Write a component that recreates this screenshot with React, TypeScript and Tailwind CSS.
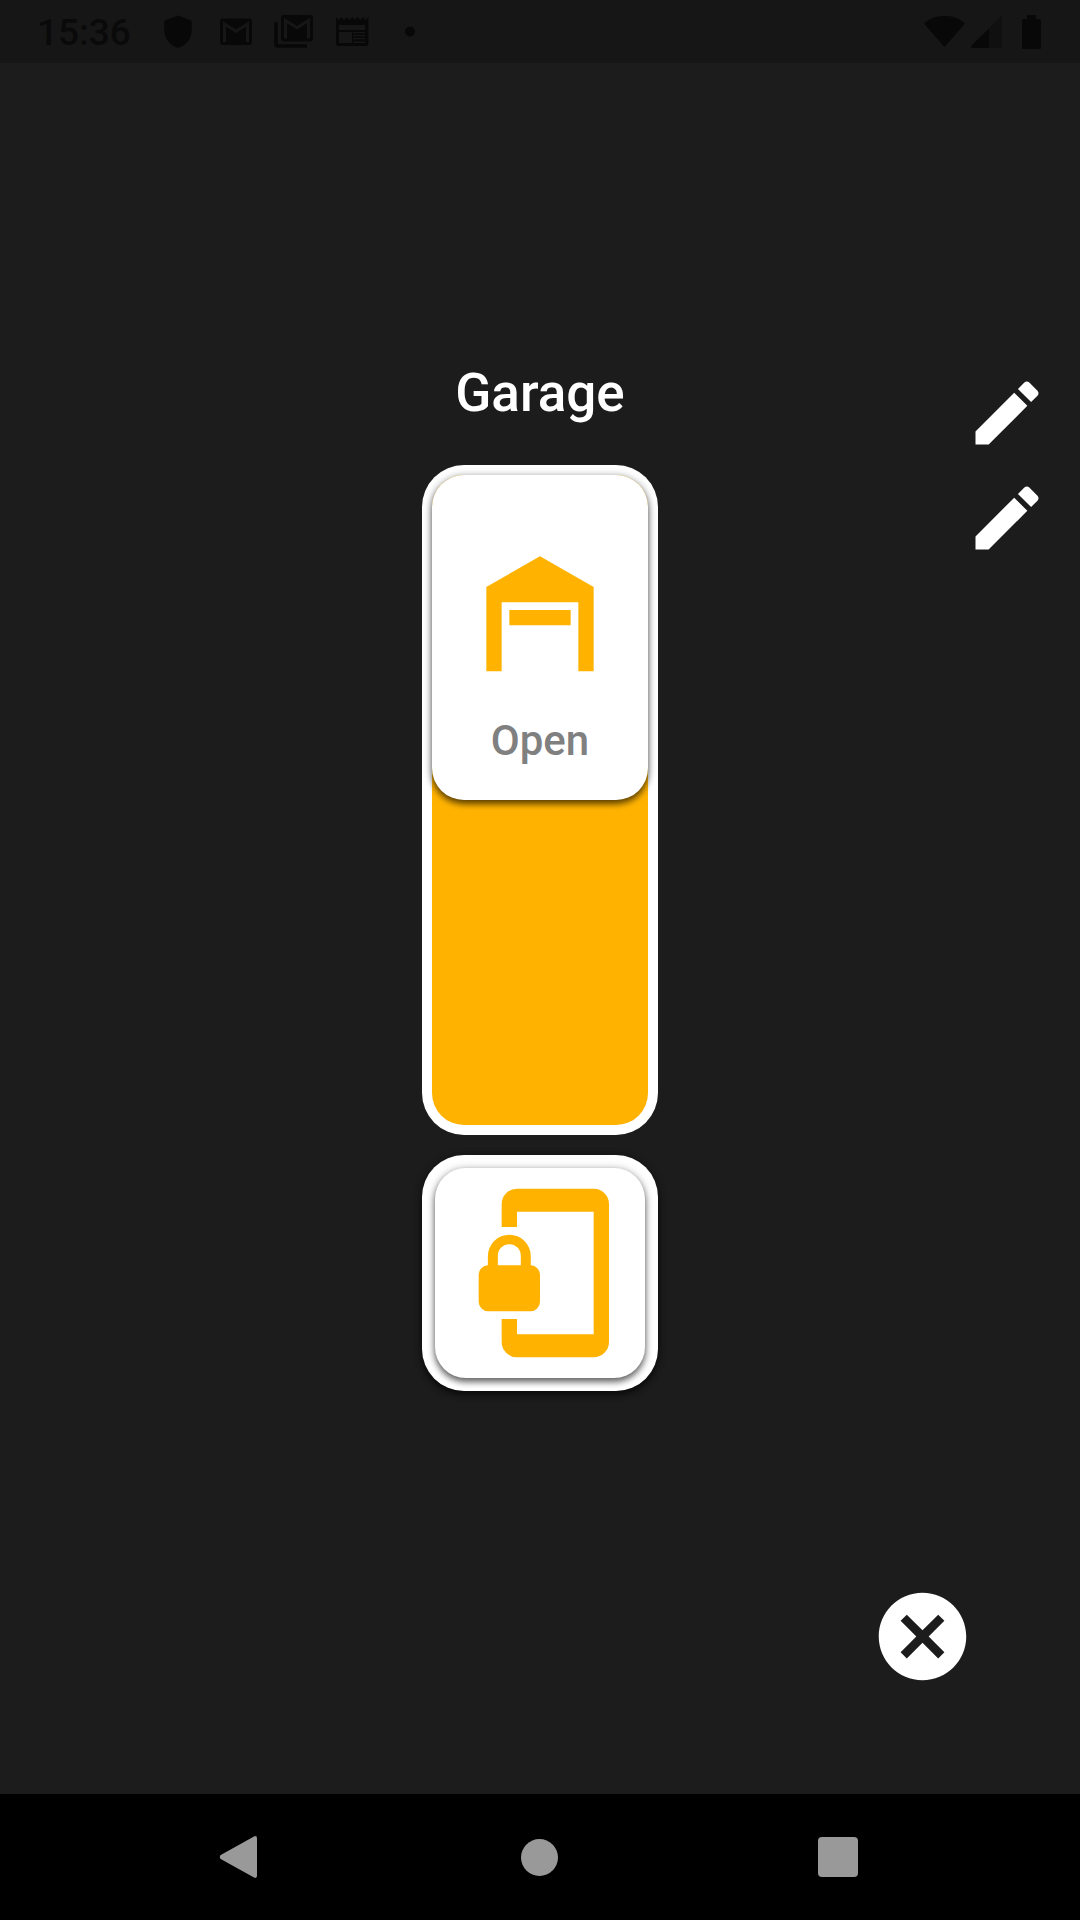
import { useState } from "react";

function ShieldIcon() {
  return (
    <svg viewBox="0 0 40 40" className="size-10" fill="currentColor" aria-hidden="true">
      <path d="M20 3.5 33.7 8.8V18.5C33.7 26.5 28 33.5 20 36 12 33.5 6.3 26.5 6.3 18.5V8.8Z" />
    </svg>
  );
}

function MailIcon() {
  return (
    <svg viewBox="0 0 40 40" className="size-10" aria-hidden="true">
      <rect x="4" y="6.5" width="32" height="26.5" rx="3" fill="currentColor" />
      <path d="M8.5 30V12L20 19.3 31.5 12V30" fill="none" stroke="#161616" strokeWidth="3" />
    </svg>
  );
}

function MailStackIcon() {
  return (
    <svg viewBox="0 0 40 40" className="size-10" aria-hidden="true">
      <path d="M2 10V32Q2 34 4 34H33" fill="none" stroke="currentColor" strokeWidth="3.6" />
      <rect x="7" y="3" width="32" height="26.5" rx="3" fill="currentColor" />
      <path d="M11.5 26.5V8.5L23 15.8 34.5 8.5V26.5" fill="none" stroke="#161616" strokeWidth="3" />
    </svg>
  );
}

function NewsIcon() {
  return (
    <svg viewBox="0 0 40 40" className="size-10" aria-hidden="true">
      <path
        d="M4 5 6.7 8 9.4 5 12.1 8 14.8 5 17.5 8 20.2 5 22.9 8 25.6 5 28.3 8 31 5 33.7 8 36.5 5V31Q36.5 34 33.5 34H7Q4 34 4 31Z"
        fill="currentColor"
      />
      <path
        d="M7 13H33V18H7ZM7 20H20V31H7ZM21 20H33V21.3H21ZM21 23H33V24.3H21ZM21 26H33V27.3H21ZM21 29.5H33V31H21Z"
        fill="#161616"
      />
    </svg>
  );
}

function StatusBar() {
  return (
    <header className="flex h-[63px] shrink-0 items-center justify-between bg-[#161616] pr-[39px] pl-[37px] text-[#080808]">
      <div className="flex items-center">
        <time className="w-[112px] pt-[3px] text-[37px] leading-[44px] font-medium text-[#0a0a0a]">15:36</time>
        <div className="flex items-center *:w-[58px]">
          <ShieldIcon />
          <MailIcon />
          <MailStackIcon />
          <NewsIcon />
          <svg viewBox="0 0 40 40" className="size-10" fill="currentColor" aria-hidden="true">
            <circle cx="20" cy="19.5" r="5" />
          </svg>
        </div>
      </div>
      <div className="flex items-center">
        <svg viewBox="0 0 41 34" className="h-[34px] w-[41px]" fill="currentColor" aria-hidden="true">
          <path d="M20.5 32 .8 9.5Q0 8 1.5 7 10 .8 20.5 .8T39.5 7Q41 8 40.2 9.5Z" />
        </svg>
        <svg viewBox="0 0 31 34" className="ml-1.5 h-[34px] w-[31px]" aria-hidden="true">
          <path d="M31 3V33H18V13.5L28.5 2.4Q31 0 31 3Z" fill="#101010" />
          <path d="M18 13.5V33H1Q-.5 32 .5 30.5Z" fill="currentColor" />
        </svg>
        <svg viewBox="0 0 19 34" className="ml-5 h-[34px] w-[19px]" fill="currentColor" aria-hidden="true">
          <path d="M5 0H14V4H17.5Q19 4 19 5.5V32.5Q19 34 17.5 34H1.5Q0 34 0 32.5V5.5Q0 4 1.5 4H5Z" />
        </svg>
      </div>
    </header>
  );
}

function EditButton({ label }: { label: string }) {
  return (
    <button type="button" aria-label={label} className="size-[84px] text-white">
      <svg viewBox="0 0 24 24" className="size-full" fill="currentColor" aria-hidden="true">
        <path d="M3 17.25V21h3.75L17.81 9.94l-3.75-3.75L3 17.25zM20.71 7.04c.39-.39.39-1.02 0-1.41l-2.34-2.34c-.39-.39-1.02-.39-1.41 0l-1.83 1.83 3.75 3.75 1.83-1.83z" />
      </svg>
    </button>
  );
}

function GarageSwitch() {
  const [open, setOpen] = useState(true);
  return (
    <button
      type="button"
      role="switch"
      aria-checked={open}
      aria-label="Garage door"
      onClick={() => setOpen(!open)}
      className="h-[670px] w-[236px] rounded-[42px] bg-white p-[10px]"
    >
      <span className={`flex size-full flex-col rounded-[32px] bg-[#ffb300] ${open ? "justify-start" : "justify-end"}`}>
        <span className="flex h-1/2 flex-col items-center justify-center gap-3.5 rounded-[32px] bg-white pt-2 shadow-[0_4px_6px_rgba(0,0,0,0.55),0_1px_8px_rgba(0,0,0,0.3)]">
          <svg viewBox="0 0 24 24" className="size-[184px]" fill="#ffb300" aria-hidden="true">
            <path d="M19,20H17V11H7V20H5V9L12,5L19,9V20M8,12H16V14H8V12Z" />
          </svg>
          <span className="text-[42px] leading-[50px] font-medium text-[#808080]">{open ? "Open" : "Closed"}</span>
        </span>
      </span>
    </button>
  );
}

function LockButton() {
  return (
    <button
      type="button"
      aria-label="Lock"
      className="size-[236px] rounded-[42px] bg-white p-[13px] shadow-[0_4px_6px_rgba(0,0,0,0.55),0_1px_8px_rgba(0,0,0,0.3)]"
    >
      <span className="flex size-full items-center justify-center rounded-[31px] bg-white shadow-[0_4px_6px_rgba(0,0,0,0.5),0_1px_8px_rgba(0,0,0,0.3)]">
        <svg viewBox="0 0 24 24" className="size-[184px]" fill="#ffb300" aria-hidden="true">
          <path d="M19 1H9a2 2 0 0 0-2 2v3h2V4h10v16H9v-2H7v3a2 2 0 0 0 2 2h10a2 2 0 0 0 2-2V3a2 2 0 0 0-2-2Z" />
          <path
            fillRule="evenodd"
            d="M10.8 11V9.8A2.8 2.8 0 0 0 5.2 9.8V11A1.25 1.25 0 0 0 4 12.25V15.75A1.25 1.25 0 0 0 5.25 17H10.75A1.25 1.25 0 0 0 12 15.75V12.25A1.25 1.25 0 0 0 10.8 11ZM9.5 11H6.5V9.75A1.5 1.5 0 0 1 9.5 9.75Z"
          />
        </svg>
      </span>
    </button>
  );
}

function NavigationBar() {
  return (
    <nav className="flex h-[126px] shrink-0 justify-center bg-black pr-0.5 text-[#999999] *:w-[299px]">
      <button type="button" aria-label="Back" className="flex items-center justify-center">
        <svg viewBox="0 0 42 42" className="size-[42px]" fill="currentColor" aria-hidden="true">
          <path d="M1.7 19 35 .5Q38 -1 38 2.5V39.5Q38 43 35 41.5L1.7 23Q-.1 21 1.7 19Z" />
        </svg>
      </button>
      <button type="button" aria-label="Home" className="flex items-center justify-center">
        <span className="size-[37px] rounded-full bg-current" />
      </button>
      <button type="button" aria-label="Recent apps" className="flex items-center justify-center">
        <span className="size-10 rounded bg-current" />
      </button>
    </nav>
  );
}

export default function App() {
  return (
    <div className="flex min-h-screen flex-col bg-[#1c1c1c] font-[Roboto,sans-serif]">
      <StatusBar />
      <main className="grid flex-1 grid-cols-[1fr_auto_1fr] pb-[105px]">
        <section className="col-start-2 flex flex-col items-center justify-center">
          <h1 className="mb-10 text-[53px] leading-[64px] font-medium text-white">Garage</h1>
          <GarageSwitch />
          <div className="mt-5">
            <LockButton />
          </div>
        </section>
        <aside className="flex flex-col items-end pt-[308px] pr-[31px]">
          <div className="flex flex-col gap-[21px]">
            <EditButton label="Edit name" />
            <EditButton label="Edit icon" />
          </div>
          <button type="button" aria-label="Close" className="mt-auto mr-[74px] size-[105px] text-white">
            <svg viewBox="0 0 24 24" className="size-full" fill="currentColor" aria-hidden="true">
              <path d="M12 2C6.47 2 2 6.47 2 12s4.47 10 10 10 10-4.47 10-10S17.53 2 12 2zm5 13.59L15.59 17 12 13.41 8.41 17 7 15.59 10.59 12 7 8.41 8.41 7 12 10.59 15.59 7 17 8.41 13.41 12 17 15.59z" />
            </svg>
          </button>
        </aside>
      </main>
      <NavigationBar />
    </div>
  );
}
